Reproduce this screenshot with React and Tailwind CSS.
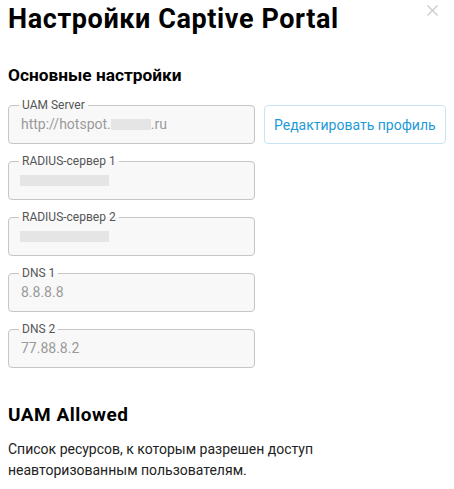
import React from "react";

function Field({ label, children }) {
  return (
    <fieldset className="m-0 w-[247px] rounded-[4px] border border-[#c6c6c6] bg-[#f8f8f8] px-[12px] pt-[2px] pb-[9px]">
      <legend className="ml-[-2px] px-[3px] text-[12px] leading-[14px] text-[#555555]">
        {label}
      </legend>
      <div className="flex h-[20px] items-center text-[14px] leading-[20px] text-[#9a9a9a]">
        {children}
      </div>
    </fieldset>
  );
}

export default function App() {
  return (
    <div className="relative h-[489px] w-[454px] overflow-hidden bg-white pl-[8px] font-['Roboto',_sans-serif] text-[#111111]">
      <button className="absolute right-[16px] top-[5px] h-[11px] w-[11px] p-0" aria-label="close">
        <svg viewBox="0 0 11 11" className="block h-[11px] w-[11px]">
          <path d="M0.5 0.5 L10.5 10.5 M10.5 0.5 L0.5 10.5" stroke="#cccccc" strokeWidth="1.4" fill="none" />
        </svg>
      </button>

      <h1 className="pt-[4px] text-[27px] font-bold leading-[30px] tracking-[0.6px] text-black">
        Настройки Captive Portal
      </h1>

      <h2 className="mt-[29px] text-[17.3px] font-bold leading-[24px] text-black">
        Основные настройки
      </h2>

      <div className="mt-[11px] flex flex-col gap-[10px]">
        <div className="flex items-start gap-[9px]">
          <Field label="UAM Server">
            <span>http://hotspot.</span>
            <span className="inline-block h-[11px] w-[40px] bg-[#e5e5e5]" />
            <span>.ru</span>
          </Field>
          <button className="mt-[7px] h-[39px] rounded-[4px] border border-[#c8e5f5] bg-white px-[9px] text-[14px] leading-[20px] text-[#1e9ad8]">
            Редактировать профиль
          </button>
        </div>
        <Field label="RADIUS-сервер 1">
          <span className="ml-[-1px] inline-block h-[11px] w-[89px] bg-[#e5e5e5]" />
        </Field>
        <Field label="RADIUS-сервер 2">
          <span className="ml-[-1px] inline-block h-[11px] w-[89px] bg-[#e5e5e5]" />
        </Field>
        <Field label="DNS 1">8.8.8.8</Field>
        <Field label="DNS 2">77.88.8.2</Field>
      </div>

      <h2 className="mt-[35px] text-[19px] font-bold leading-[24px] tracking-[0.5px] text-black">
        UAM Allowed
      </h2>
      <p className="mt-[12px] max-w-[380px] text-[14px] leading-[21px] text-[#222222]">
        Список ресурсов, к которым разрешен доступ неавторизованным пользователям.
      </p>
    </div>
  );
}
